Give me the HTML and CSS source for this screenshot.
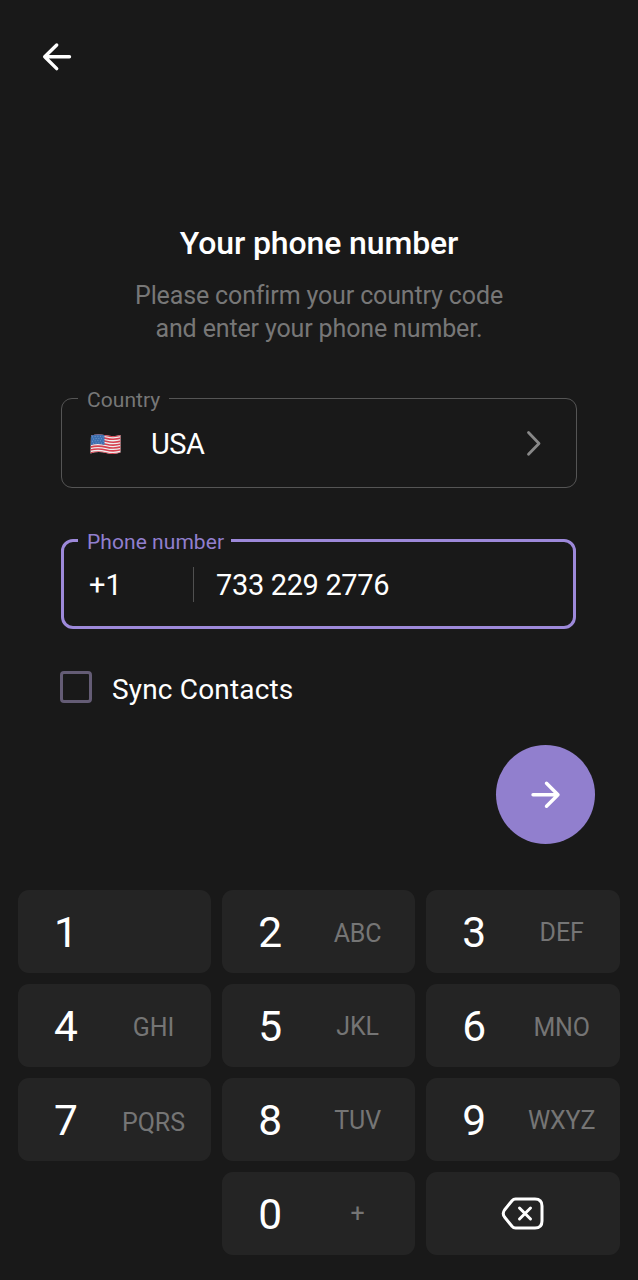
FILE: index.html
```html
<!DOCTYPE html>
<html lang="en">
<head>
<meta charset="utf-8">
<title>Your phone number</title>
<link rel="stylesheet" href="styles.css">
</head>
<body>
<main class="screen">
  <header class="topbar">
    <svg class="arrow" width="32" height="32" viewBox="0 0 32 32"><path d="M28.500 15.800H3.700M15.700 4L3.700 15.800L15.700 27.600"/></svg>
  </header>
  <section class="intro">
    <h1 class="title">Your phone number</h1>
    <p class="subtitle">Please confirm your country code<br>and enter your phone number.</p>
  </section>
  <form class="form">
    <fieldset class="field country">
      <legend class="label">Country</legend>
      <div class="row">
        <svg class="flag" width="32" height="24" viewBox="0 0 32 24">
          <defs><clipPath id="wave"><path d="M1 3.500Q8 1.500 16 3.300T30.500 3V20.500Q24 23 16 21T0.500 21.500Z"/></clipPath></defs>
          <g clip-path="url(#wave)">
            <path fill="#eee" d="M0 0H32V24H0Z"/>
            <g fill="none" stroke="#d6404f" stroke-width="1.600">
              <path d="M0 3.500Q8 1.500 16 3.500T32 3M0 6.400Q8 4.400 16 6.400T32 5.900M0 9.300Q8 7.300 16 9.300T32 8.800M0 12.200Q8 10.200 16 12.200T32 11.700M0 15.100Q8 13.100 16 15.100T32 14.600M0 18Q8 16 16 18T32 17.500M0 21Q8 19 16 21T32 20.500"/>
            </g>
            <path fill="#3d6fb0" d="M0 1Q7 .5 14.500 2V13Q7 11 0 13.500Z"/>
            <path fill="none" stroke="#86a9d6" stroke-width=".8" stroke-dasharray="1 1.700" d="M2 5Q8 3.500 14 5M3 7.200Q8 5.700 14 7.200M2 9.400Q8 7.900 14 9.400M3 11.500Q8 10.200 14 11.500"/>
          </g>
        </svg>
        <span class="country-name">USA</span>
        <svg class="chevron" width="18" height="28" viewBox="0 0 18 28"><path d="M3.500 2.500L14 13.500L3.500 24.300"/></svg>
      </div>
    </fieldset>
    <fieldset class="field phone">
      <legend class="label">Phone number</legend>
      <div class="row">
        <span class="code">+1</span>
        <span class="divider"></span>
        <span class="number">733 229 2776</span>
      </div>
    </fieldset>
    <label class="sync"><span class="box"></span><span class="sync-text">Sync Contacts</span></label>
    <button class="next" type="button" aria-label="Next">
      <svg class="arrow" width="32" height="32" viewBox="0 0 32 32"><path d="M3 15.700H28M16.500 4.200L28 15.700L16.500 27.200"/></svg>
    </button>
  </form>
  <section class="keypad">
    <div class="key"><span class="digit">1</span><span class="letters"></span></div>
    <div class="key"><span class="digit">2</span><span class="letters low">ABC</span></div>
    <div class="key"><span class="digit">3</span><span class="letters">DEF</span></div>
    <div class="key"><span class="digit">4</span><span class="letters low">GHI</span></div>
    <div class="key"><span class="digit">5</span><span class="letters">JKL</span></div>
    <div class="key"><span class="digit">6</span><span class="letters low">MNO</span></div>
    <div class="key"><span class="digit">7</span><span class="letters lower">PQRS</span></div>
    <div class="key"><span class="digit">8</span><span class="letters">TUV</span></div>
    <div class="key"><span class="digit">9</span><span class="letters">WXYZ</span></div>
    <div class="key zero"><span class="digit">0</span><span class="letters high">+</span></div>
    <div class="key erase">
      <svg class="backspace" width="44" height="36" viewBox="0 0 44 36"><path d="M14.500 3H34Q41 3 41 10V25Q41 32 34 32H14.500Q12.500 32 11 30.300L3.500 21Q1 17.500 3.500 14L11 4.700Q12.500 3 14.500 3Z"/><path d="M18.500 12L29.500 23M29.500 12L18.500 23"/></svg>
    </div>
  </section>
</main>
</body>
</html>
```
FILE: styles.css
```css
* { box-sizing: border-box; }
body {
  margin: 0;
  background: #191919;
  color: #fff;
  font-family: Roboto, sans-serif;
}
.screen {
  display: flex;
  flex-direction: column;
  height: 1280px;
  overflow: hidden;
}
svg { display: block; flex: none; }
.topbar { height: 224px; padding: 41px 0 0 41px; }
.arrow {
  fill: none;
  stroke: #fff;
  stroke-width: 3.4;
  stroke-linecap: round;
  stroke-linejoin: round;
}
.intro { height: 164px; text-align: center; }
.title {
  margin: 0;
  font-size: 32px;
  font-weight: 500;
  line-height: 39px;
  letter-spacing: -0.12px;
}
.subtitle {
  margin: 17px 0 0;
  color: #777;
  font-size: 25px;
  line-height: 32.5px;
  letter-spacing: -0.14px;
}
.form { display: flex; flex-direction: column; padding: 0 61px; height: 502px; }
.field {
  width: 516px;
  margin: 0;
  padding: 0 0 0 16px;
  border: 1px solid #555;
  border-radius: 11px;
}
.label {
  height: 20px;
  padding: 0 9px;
  color: #777;
  font-size: 21px;
  line-height: 24px;
  letter-spacing: 0.06px;
}
.row { display: flex; align-items: center; }
.country { height: 100px; }
.country .row { height: 72px; }
.flag { margin-left: 12px; }
.country-name {
  width: 374px;
  margin-left: 29px;
  font-size: 29px;
  line-height: 34px;
  letter-spacing: -0.5px;
}
.chevron {
  fill: none;
  stroke: #888;
  stroke-width: 2.8;
  stroke-linecap: round;
  stroke-linejoin: round;
}
.phone {
  width: 515px;
  height: 99px;
  margin-top: 42px;
  border: 3px solid #9d89da;
  border-radius: 12px;
  padding-left: 14px;
}
.phone .label { color: #917fce; padding: 0 7px 0 9px; }
.phone .row { height: 68px; font-size: 29px; }
.code { width: 103px; margin: 2px 0 0 11px; }
.divider { width: 1px; height: 35px; margin-left: 1px; background: #505050; }
.number { margin: 2px 0 0 22px; letter-spacing: -0.35px; }
.sync {
  display: flex;
  align-items: center;
  height: 34px;
  margin: 41px 0 0 -1px;
}
.box {
  width: 32px;
  height: 32px;
  border: 3px solid #645c75;
  border-radius: 4px;
}
.sync-text {
  margin: 6px 0 0 20px;
  font-size: 28px;
  line-height: 34px;
  letter-spacing: 0.17px;
}
.next {
  display: grid;
  place-items: center;
  flex: none;
  width: 99px;
  height: 99px;
  margin: 41px 0 0 435px;
  padding: 0;
  border: 0;
  border-radius: 50%;
  background: #917fce;
}
.keypad {
  display: grid;
  grid-template-columns: repeat(3, 193.4px);
  grid-auto-rows: 83px;
  gap: 11px 10.7px;
  padding: 0 18px;
}
.key {
  display: flex;
  align-items: center;
  border-radius: 11px;
  background: #242424;
}
.digit {
  width: 96px;
  padding-top: 3px;
  font-size: 42.5px;
  line-height: 50px;
  text-align: center;
}
.letters {
  width: 79px;
  color: #757575;
  font-size: 25px;
  line-height: 30px;
  text-align: center;
  padding-top: 2px;
  letter-spacing: -0.1px;
}
.low { padding-top: 4px; }
.lower { padding-top: 6px; }
.high { padding-top: 0; }
.zero { grid-column: 2; }
.erase { justify-content: center; }
.backspace {
  fill: none;
  stroke: #fff;
  stroke-width: 3;
  stroke-linecap: round;
  stroke-linejoin: round;
}
```
